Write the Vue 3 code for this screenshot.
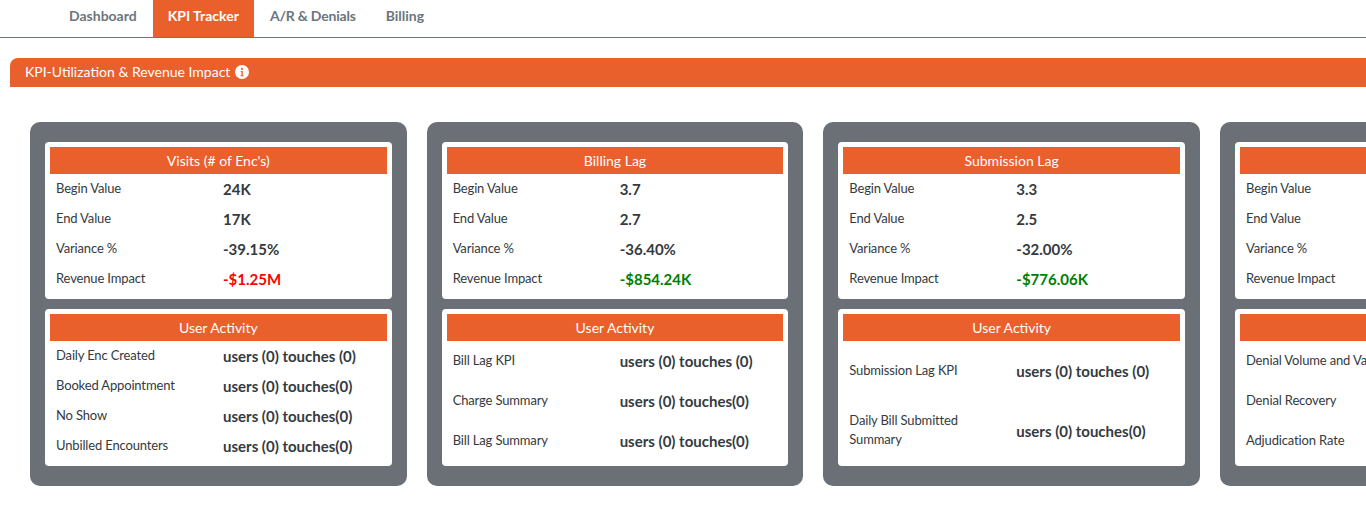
<template>
  <div class="page">
    <nav class="tabs">
      <a v-for="tab in tabs" :key="tab" class="tab" :class="{ active: tab === 'KPI Tracker' }">{{ tab }}</a>
    </nav>

    <div class="banner">
      <span>KPI-Utilization &amp; Revenue Impact</span>
      <svg class="info" viewBox="0 0 14 14" width="14" height="14">
        <circle cx="7" cy="7" r="7" fill="#fff" />
        <circle cx="7" cy="3.9" r="1.1" fill="#ea602d" />
        <path d="M5.7 6h2.1v4.3h.8v1H5.5v-1h.9V7h-.7z" fill="#ea602d" />
      </svg>
    </div>

    <div class="cards">
      <section v-for="card in cards" :key="card.title" class="card">
        <div class="panel">
          <h4>{{ card.title }}</h4>
          <div class="rows">
            <div v-for="row in card.stats" :key="row.label" class="row">
              <span class="label">{{ row.label }}</span>
              <span class="value" :class="row.tone">{{ row.value }}</span>
            </div>
          </div>
        </div>
        <div class="panel">
          <h4>User Activity</h4>
          <div class="rows">
            <div v-for="row in card.activity" :key="row.label" class="row">
              <span class="label">{{ row.label }}</span>
              <span class="value">{{ row.value }}</span>
            </div>
          </div>
        </div>
      </section>
    </div>
  </div>
</template>

<script setup>
const tabs = ['Dashboard', 'KPI Tracker', 'A/R & Denials', 'Billing']

const stats = (begin, end, variance, impact, tone) => [
  { label: 'Begin Value', value: begin },
  { label: 'End Value', value: end },
  { label: 'Variance %', value: variance },
  { label: 'Revenue Impact', value: impact, tone }
]

const cards = [
  {
    title: "Visits (# of Enc's)",
    stats: stats('24K', '17K', '-39.15%', '-$1.25M', 'bad'),
    activity: [
      { label: 'Daily Enc Created', value: 'users (0) touches (0)' },
      { label: 'Booked Appointment', value: 'users (0) touches(0)' },
      { label: 'No Show', value: 'users (0) touches(0)' },
      { label: 'Unbilled Encounters', value: 'users (0) touches(0)' }
    ]
  },
  {
    title: 'Billing Lag',
    stats: stats('3.7', '2.7', '-36.40%', '-$854.24K', 'good'),
    activity: [
      { label: 'Bill Lag KPI', value: 'users (0) touches (0)' },
      { label: 'Charge Summary', value: 'users (0) touches(0)' },
      { label: 'Bill Lag Summary', value: 'users (0) touches(0)' }
    ]
  },
  {
    title: 'Submission Lag',
    stats: stats('3.3', '2.5', '-32.00%', '-$776.06K', 'good'),
    activity: [
      { label: 'Submission Lag KPI', value: 'users (0) touches (0)' },
      { label: 'Daily Bill Submitted Summary', value: 'users (0) touches(0)' }
    ]
  },
  {
    title: 'Denial Rate',
    stats: stats('', '', '', '', ''),
    activity: [
      { label: 'Denial Volume and Value', value: '' },
      { label: 'Denial Recovery', value: '' },
      { label: 'Adjudication Rate', value: '' }
    ]
  }
]
</script>

<style>
html,
body {
  margin: 0;
  background: #fff;
  overflow: hidden;
}
</style>

<style scoped>
.page {
  width: 1366px;
  height: 520px;
  overflow: hidden;
  font-family: Lato, "Liberation Sans", sans-serif;
  color: #343a40;
}

.tabs {
  display: flex;
  height: 37px;
  padding-left: 54px;
  border-bottom: 1px solid #6c757d;
}

.tab {
  padding: 0 15px;
  line-height: 31px;
  font-size: 14px;
  font-weight: 700;
  color: #6c757d;
}

.tab.active {
  margin-left: 1px;
  background: #ea602d;
  color: #fff;
}

.tab:nth-child(3) {
  padding-left: 16px;
  letter-spacing: -0.2px;
}

.banner {
  box-sizing: border-box;
  display: flex;
  align-items: center;
  gap: 5px;
  height: 29px;
  margin: 20px 0 35px 10px;
  padding: 0 0 1px 15px;
  border-radius: 8px 0 0 0;
  background: #ea602d;
  color: #fff;
  font-size: 14px;
  line-height: 16px;
}

.banner span {
  margin-top: -1px;
}

.cards {
  display: flex;
  gap: 20px;
  padding-left: 30px;
}

.card {
  flex: 0 0 376.67px;
  box-sizing: border-box;
  height: 364px;
  padding: 20px 15px;
  border-radius: 10px;
  background: #6b7076;
  display: flex;
  flex-direction: column;
  gap: 10px;
}

.panel {
  flex: 1;
  display: flex;
  flex-direction: column;
  padding: 5px;
  border-radius: 4px;
  background: #fff;
}

h4 {
  margin: 0;
  height: 27px;
  line-height: 28px;
  background: #ea602d;
  color: #fff;
  font-size: 14px;
  font-weight: 400;
  text-align: center;
}

.rows {
  flex: 1;
  display: flex;
  flex-direction: column;
}

.row {
  flex: 1;
  display: flex;
  align-items: center;
}

.label {
  box-sizing: border-box;
  flex: 0 0 173px;
  padding: 0 12px 0 6px;
  margin-top: -2px;
  font-size: 13px;
  line-height: 19px;
  letter-spacing: -0.15px;
}

.value {
  font-size: 15px;
  font-weight: 700;
  white-space: nowrap;
}

.bad {
  color: #f00;
}

.good {
  color: #008000;
}
</style>
